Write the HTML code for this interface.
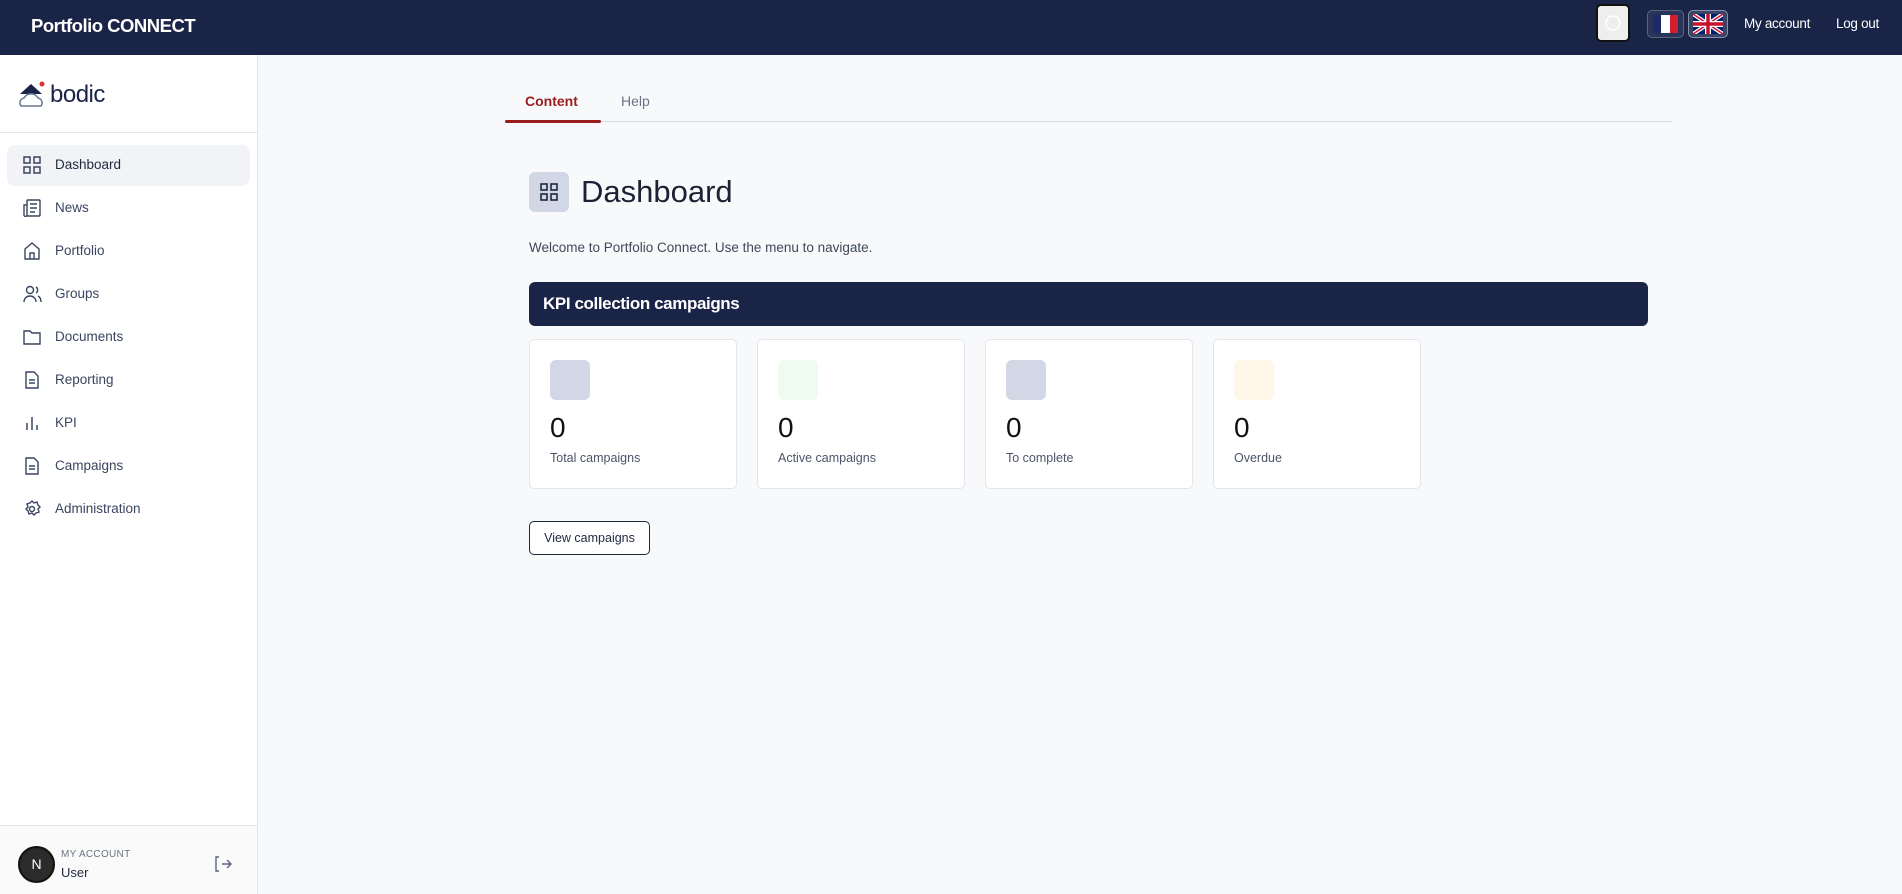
<!DOCTYPE html>
<html><head><meta charset="utf-8"><style>
*{box-sizing:border-box;margin:0;padding:0}
body{width:1902px;height:894px;overflow:hidden;background:#f8f9fb;font-family:"Liberation Sans",sans-serif;color:#1e2940;position:relative}
.hdr{position:absolute;left:0;top:0;width:1902px;height:55px;background:#1a2447}
.hdr .t{position:absolute;left:31px;top:15px;color:#fff;font-size:18.5px;font-weight:bold;letter-spacing:-0.5px}
.side{position:absolute;left:0;top:55px;width:258px;height:839px;background:#fff;border-right:1px solid #e4e6eb}
.nav{position:absolute;left:7px;width:243px;height:41px;border-radius:8px;font-size:13.5px;color:#3a4560}
.nav svg{position:absolute;left:16px;top:11px}
.nav span{position:absolute;left:48px;top:12px}
.abs{position:absolute}
.card{position:absolute;top:339px;width:208px;height:150px;background:#fff;border:1px solid #e3e5ea;border-radius:5px}
.card .ic{position:absolute;left:20px;top:20px;width:40px;height:40px;border-radius:6px}
.card .n{position:absolute;left:20px;top:72px;font-size:28px;color:#111}
.card .l{position:absolute;left:20px;top:111px;font-size:12.5px;color:#4b5568}
</style></head><body>
<div class="hdr"><div class="t">Portfolio CONNECT</div>
<div class="abs" style="left:1596px;top:4px;width:34px;height:38px;background:#eee;border:2px solid #111;border-radius:5px"><svg width="30" height="34"><circle cx="15" cy="17" r="7" fill="none" stroke="#fff" stroke-width="1.5"/></svg></div>
<div class="abs" style="left:1647px;top:10px;width:37px;height:28px;border:1px solid #5a6482;border-radius:5px;background:#2a3458;padding:4px 5px"><div style="display:flex;height:100%"><div style="flex:1;background:#1a2a6b"></div><div style="flex:1;background:#fff"></div><div style="flex:1;background:#d11f2f"></div></div></div>
<div class="abs" style="left:1688px;top:10px;width:40px;height:28px;border:1px solid #8a93ad;border-radius:5px;background:#3a4466;padding:3px 4px"><svg width="30" height="20" viewBox="0 0 60 40"><rect width="60" height="40" fill="#012169"/><path d="M0 0L60 40M60 0L0 40" stroke="#fff" stroke-width="8"/><path d="M0 0L60 40M60 0L0 40" stroke="#c8102e" stroke-width="3"/><path d="M30 0V40M0 20H60" stroke="#fff" stroke-width="12"/><path d="M30 0V40M0 20H60" stroke="#c8102e" stroke-width="7"/></svg></div>
<div class="abs" style="left:1744px;top:16px;color:#fff;font-size:13.5px;letter-spacing:-0.3px">My account</div>
<div class="abs" style="left:1836px;top:16px;color:#fff;font-size:13.5px;letter-spacing:-0.3px">Log out</div>
</div>
<div class="side">
<svg class="abs" style="left:18px;top:25px" width="28" height="30" viewBox="0 0 28 30"><path d="M2 14L13 4L24 14Z" fill="#1a2447"/><circle cx="24" cy="4" r="2.5" fill="#e03030"/><path d="M3 26a5 5 0 0 1 3-8a8 8 0 0 1 14 0a5 5 0 0 1 3 8Z" fill="none" stroke="#6b7594" stroke-width="1.5"/></svg>
<div class="abs" style="left:50px;top:26px;font-size:24px;color:#1a2447;letter-spacing:-0.5px">bodic</div>
<div class="abs" style="left:0;top:77px;width:257px;border-top:1px solid #e4e6eb"></div>
<div class="nav" style="top:90px;background:#f2f3f6;color:#1e2940"><svg width="18" height="18" viewBox="0 0 18 18" fill="none" stroke="#3a4560" stroke-width="1.5"><rect x="1" y="1" width="6" height="6"/><rect x="11" y="1" width="6" height="6"/><rect x="1" y="11" width="6" height="6"/><rect x="11" y="11" width="6" height="6"/></svg><span>Dashboard</span></div>
<div class="nav" style="top:133px"><svg width="18" height="18" viewBox="0 0 18 18" fill="none" stroke="#3a4560" stroke-width="1.4"><rect x="4" y="1" width="13" height="16" rx="1"/><path d="M4 6H1v10a1 1 0 0 0 3 0M7 5h7M7 9h7M7 13h5"/></svg><span>News</span></div>
<div class="nav" style="top:176px"><svg width="18" height="18" viewBox="0 0 18 18" fill="none" stroke="#3a4560" stroke-width="1.4"><path d="M2 7L9 1l7 6v10H2Z M7 17v-6h4v6"/></svg><span>Portfolio</span></div>
<div class="nav" style="top:219px"><svg width="20" height="18" viewBox="0 0 20 18" fill="none" stroke="#3a4560" stroke-width="1.4"><circle cx="7" cy="5" r="3.5"/><path d="M1 17c0-4 3-6 6-6s6 2 6 6M13 2a3.5 3.5 0 0 1 0 6M15 11c2 1 3 3 3 6"/></svg><span>Groups</span></div>
<div class="nav" style="top:262px"><svg width="18" height="18" viewBox="0 0 18 18" fill="none" stroke="#3a4560" stroke-width="1.4"><path d="M1 3h6l2 2h8v11H1Z"/></svg><span>Documents</span></div>
<div class="nav" style="top:305px"><svg width="18" height="18" viewBox="0 0 18 18" fill="none" stroke="#3a4560" stroke-width="1.4"><path d="M3 1h8l4 4v12H3Z M6 9h6M6 12h6"/></svg><span>Reporting</span></div>
<div class="nav" style="top:348px"><svg width="18" height="18" viewBox="0 0 18 18" fill="none" stroke="#3a4560" stroke-width="1.5"><path d="M4 16V9M9 16V3M14 16v-5"/></svg><span>KPI</span></div>
<div class="nav" style="top:391px"><svg width="18" height="18" viewBox="0 0 18 18" fill="none" stroke="#3a4560" stroke-width="1.4"><path d="M3 1h8l4 4v12H3Z M6 9h6M6 12h6"/></svg><span>Campaigns</span></div>
<div class="nav" style="top:434px"><svg width="18" height="18" viewBox="0 0 18 18" fill="none" stroke="#3a4560" stroke-width="1.4"><circle cx="9" cy="9" r="2.5"/><path d="M9 1l2 2 3-1 1 3 2 2-2 2 1 3-3 1-2 2-2-2-3 1-1-3-2-2 2-2-1-3 3-1Z"/></svg><span>Administration</span></div>
<div class="abs" style="left:0;top:770px;width:257px;height:69px;border-top:1px solid #e4e6eb;background:#fafafa"></div>
<div class="abs" style="left:18px;top:791px;width:37px;height:37px;border-radius:50%;background:#2b2b2b;border:2px solid #111;color:#fff;font-size:14px;text-align:center;line-height:33px">N</div>
<div class="abs" style="left:61px;top:794px;font-size:10px;color:#6b7385;letter-spacing:.3px">MY ACCOUNT</div>
<div class="abs" style="left:61px;top:810px;font-size:13px;color:#1e2940">User</div>
<svg class="abs" style="left:214px;top:800px" width="18" height="18" viewBox="0 0 18 18" fill="none" stroke="#5a6480" stroke-width="1.4"><path d="M5 2H2v14h3M8 9h9M13 5l4 4-4 4"/></svg>
</div>
<div class="abs" style="left:525px;top:93px;font-size:14px;font-weight:bold;color:#9b1c1c">Content</div>
<div class="abs" style="left:621px;top:93px;font-size:14px;color:#6b7385">Help</div>
<div class="abs" style="left:505px;top:121px;width:1167px;border-top:1px solid #d8dbe2"></div>
<div class="abs" style="left:505px;top:120px;width:96px;height:3px;background:#9b1c1c;border-radius:2px"></div>
<div class="abs" style="left:529px;top:172px;width:40px;height:40px;border-radius:6px;background:#d2d7e6"><svg style="position:absolute;left:11px;top:11px" width="18" height="18" viewBox="0 0 18 18" fill="none" stroke="#1e2940" stroke-width="1.6"><rect x="1" y="1" width="6" height="6"/><rect x="11" y="1" width="6" height="6"/><rect x="1" y="11" width="6" height="6"/><rect x="11" y="11" width="6" height="6"/></svg></div>
<div class="abs" style="left:581px;top:174px;font-size:31px;color:#1a2233">Dashboard</div>
<div class="abs" style="left:529px;top:240px;font-size:13.5px;color:#3f4859">Welcome to Portfolio Connect. Use the menu to navigate.</div>
<div class="abs" style="left:529px;top:282px;width:1119px;height:44px;background:#1a2447;border-radius:6px;color:#fff;font-weight:bold;font-size:17px;padding:12px 14px;letter-spacing:-0.4px">KPI collection campaigns</div>
<div class="card" style="left:529px"><div class="ic" style="background:#d2d7e6"></div><div class="n">0</div><div class="l">Total campaigns</div></div>
<div class="card" style="left:757px"><div class="ic" style="background:#eefbf1"></div><div class="n">0</div><div class="l">Active campaigns</div></div>
<div class="card" style="left:985px"><div class="ic" style="background:#d2d7e6"></div><div class="n">0</div><div class="l">To complete</div></div>
<div class="card" style="left:1213px"><div class="ic" style="background:#fff7ea"></div><div class="n">0</div><div class="l">Overdue</div></div>
<div class="abs" style="left:529px;top:521px;width:121px;height:34px;border:1px solid #1e2940;border-radius:5px;background:#fff;font-size:12.5px;text-align:center;line-height:32px">View campaigns</div>
</body></html>
